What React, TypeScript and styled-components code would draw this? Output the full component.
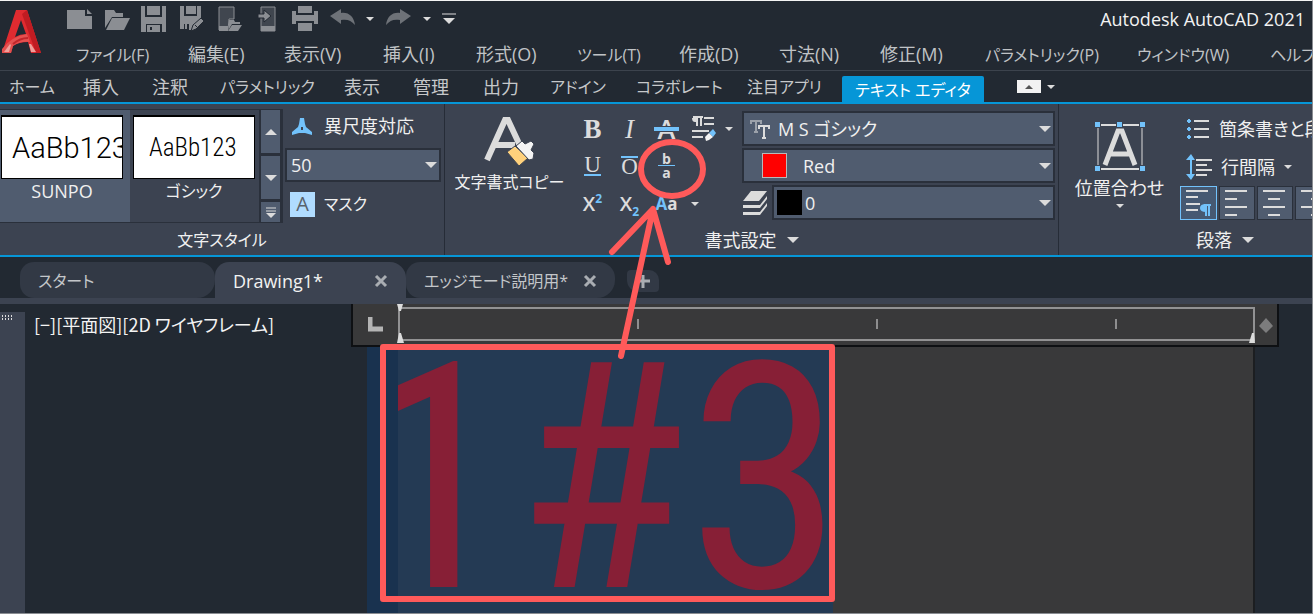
import React from "react";
import styled, { createGlobalStyle, css } from "styled-components";

const ui = '"Open Sans", "Noto Sans CJK JP", sans-serif';

const c = {
  bg: "#222932",
  panel: "#3c4351",
  field: "#505c6f",
  edge: "#2a303b",
  blue: "#0696d7",
  sky: "#72c2fb",
  ink: "#dcdcdc",
  mark: "#ff5a5a",
  grey: "#8b8e93",
};

const Global = createGlobalStyle`
  * { box-sizing: border-box; }
  body { margin: 0; background: ${c.bg}; overflow: hidden; }
  button, select { font: inherit; color: inherit; background: none; border: 0; margin: 0; padding: 0; font-feature-settings: inherit; }
  button { cursor: pointer; }
  svg { display: block; flex: none; }
`;

const Page = styled.div`
  position: relative;
  display: flex;
  flex-direction: column;
  min-height: 100vh;
  overflow: hidden;
  background: ${c.bg};
  color: ${c.ink};
  border-top: 1px solid #f4f4f4;
  border-right: 1px solid #8a8d92;
  border-bottom: 1px solid #8a8d92;
  font-family: ${ui};
  font-size: 18px;
  line-height: 24px;
  font-feature-settings: "palt";
  white-space: nowrap;
`;

/* ---------- title bar and menus ---------- */

const Header = styled.header`
  display: flex;
  height: 69px;
`;

const AppButton = styled.button`
  width: 61px;
  padding: 8px 0 0 1px;
  display: flex;
  align-items: flex-start;
  flex: none;
`;

const HeaderRows = styled.div`
  flex: 1;
  min-width: 0;
`;

const TitleBar = styled.div`
  display: flex;
  align-items: center;
  height: 36px;
  padding: 0 7px 0 5px;
`;

const ToolGroup = styled.div<{ $w: number }>`
  display: flex;
  align-items: center;
  justify-content: space-between;
  width: ${(p) => p.$w}px;
  margin-right: 10px;
`;

const Tool = styled.button`
  display: grid;
  place-items: center;
`;

const AppTitle = styled.h1`
  margin: 0 0 0 auto;
  font-size: 18px;
  line-height: 24px;
  font-weight: 400;
  color: #f2f2f2;
`;

const Menus = styled.nav`
  display: grid;
  grid-template-columns: 112px 96px 99px 93px 101px 102px 100px 101px 105px 152px 133px 80px;
  padding-left: 15px;
  height: 34px;
  align-items: center;
  color: #c0c3c6;
`;

const Label = styled.span<{ $kana?: boolean }>`
  font-size: ${(p) => (p.$kana ? 16 : 18)}px;
`;

const MenuButton = styled.button`
  text-align: left;
`;

const Tabs = styled.nav`
  display: flex;
  height: 34px;
  border-top: 1px solid #3c434d;
  border-bottom: 2px solid ${c.blue};
  color: #c6c8ca;
`;

const TabGrid = styled.div`
  display: grid;
  grid-template-columns: 74px 69px 68px 124px 69px 70px 67px 86px 111px 95px;
  padding-left: 9px;
  align-items: center;
`;

const ActiveTab = styled.button`
  width: 142px;
  margin-top: 5px;
  background: ${c.blue};
  color: #fff;
  border-radius: 2px 2px 0 0;
`;

const TabExtras = styled.div`
  display: flex;
  align-items: center;
  gap: 6px;
  margin-left: 33px;
`;

const Minimise = styled.button`
  display: grid;
  place-items: center;
  width: 24px;
  height: 13px;
  background: #f2f2f2;
`;

/* ---------- ribbon ---------- */

const Ribbon = styled.section`
  display: flex;
  height: 153px;
  background: ${c.panel};
  border-bottom: 2px solid ${c.blue};
  color: #f0f0f0;
  overflow: hidden;
`;

const Panel = styled.section<{ $w: number }>`
  display: flex;
  flex-direction: column;
  flex: none;
  width: ${(p) => p.$w}px;
  border-right: 1px solid #262c37;
`;

const PanelBody = styled.div`
  display: flex;
  flex: 1;
  min-height: 0;
`;

const PanelTitle = styled.h2`
  display: flex;
  align-items: center;
  justify-content: center;
  gap: 10px;
  height: 30px;
  margin: 0;
  font-size: 18px;
  font-weight: 400;
`;

const Gallery = styled.div`
  display: flex;
  flex: none;
  width: 283px;
  margin: 5px 0 2px;
  border: solid ${c.edge};
  border-width: 1px 3px 1px 0;
`;

const StyleTile = styled.button<{ $on?: boolean }>`
  display: flex;
  flex-direction: column;
  align-items: center;
  width: ${(p) => (p.$on ? 130 : 129)}px;
  padding-top: 5px;
  background: ${(p) => (p.$on ? c.field : c.panel)};
  padding-right: ${(p) => (p.$on ? 6 : 1)}px;
  flex: none;
`;

const Preview = styled.span<{ $wide?: boolean }>`
  display: flex;
  align-items: center;
  width: 122px;
  height: 64px;
  padding-left: ${(p) => (p.$wide ? 10 : 15)}px;
  overflow: hidden;
  background: #fff;
  color: #000;
  border: 1px solid #000;
  border-top-width: 2px;
  font-family: ${(p) => (p.$wide ? "Roboto" : '"Roboto Condensed", "Noto Sans Mono CJK JP"')}, sans-serif;
  font-weight: 300;
  font-size: ${(p) => (p.$wide ? 29 : 25)}px;
`;

const GalleryScroll = styled.div`
  display: grid;
  grid-template-rows: 43px 43px 1fr;
  gap: 3px;
  flex: 1;
  padding-left: 2px;
  background: ${c.edge};
`;

const ScrollButton = styled.button`
  display: grid;
  place-items: center;
  background: ${c.field};
`;

const TextOptions = styled.div`
  display: flex;
  flex-direction: column;
  padding: 6px 3px 0 2px;
  gap: 6px;
  flex: 1;
`;

const OptionRow = styled.button`
  display: flex;
  align-items: center;
  gap: 9px;
  height: 32px;
  padding-left: 5px;
`;

const MaskBadge = styled.span`
  display: grid;
  place-items: center;
  width: 25px;
  height: 25px;
  background: #b0dcff;
  color: #59626c;
  font-size: 20px;
`;

const Field = styled.label<{ $h?: number }>`
  position: relative;
  display: flex;
  align-items: center;
  flex: ${(p) => (p.$h ? "none" : "1")};
  height: ${(p) => p.$h ?? 35}px;
  background: ${c.field};
  border: 2px solid ${c.edge};
`;

const Picker = styled.select<{ $pad: number }>`
  appearance: none;
  width: 100%;
  height: 100%;
  padding-left: ${(p) => p.$pad}px;
  outline: 0;
`;

const FieldIcon = styled.span<{ $x: number }>`
  position: absolute;
  left: ${(p) => p.$x}px;
  pointer-events: none;
`;

const FieldArrow = styled.span`
  position: absolute;
  right: 2px;
  pointer-events: none;
`;

const Swatch = styled.span<{ $fill: string; $edge: string }>`
  display: block;
  width: 25px;
  height: 25px;
  background: ${(p) => p.$fill};
  border: 1px solid ${(p) => p.$edge};
`;

const BigButton = styled.button<{ $w: number; $top: number }>`
  display: flex;
  flex-direction: column;
  align-items: center;
  align-self: flex-start;
  flex: none;
  width: ${(p) => p.$w}px;
  padding-top: ${(p) => p.$top}px;
  gap: 4px;
`;

const FormatGrid = styled.div`
  display: grid;
  grid-template-columns: 37px 37px 37px 37px 14px;
  grid-template-rows: 37px 37px 40px;
  padding-top: 6px;
  flex: none;
`;

const FormatButton = styled.button`
  display: grid;
  place-items: center;
`;

const CaseMenu = styled.button`
  padding-left: 6px;
`;

const letter = css`
  font-family: "Liberation Serif", serif;
  line-height: 24px;
  color: ${c.ink};
`;

const Bold = styled.b`
  ${letter}
  font-size: 27px;
`;

const Italic = styled.i`
  ${letter}
  font-size: 27px;
`;

const Lined = styled.span<{ $over?: boolean }>`
  ${letter}
  font-size: 23px;
  line-height: 18px;
  border: 0 solid ${c.sky};
  border-width: ${(p) => (p.$over ? "2px 0 0" : "0 0 2px")};
`;

const Strike = styled.span`
  position: relative;
  font-size: 27px;
  font-weight: 600;
  line-height: 24px;
  color: ${c.ink};
  &::after {
    content: "";
    position: absolute;
    left: -4px;
    right: -4px;
    top: 9px;
    height: 4px;
    background: ${c.sky};
    border: solid ${c.panel};
    border-width: 1px 0;
  }
`;

const Script = styled.span`
  font-size: 20px;
  line-height: 24px;
  font-weight: 600;
  color: ${c.ink};
  sup, sub {
    color: ${c.sky};
    font-size: 12px;
    line-height: 1px;
    font-weight: 700;
  }
`;

const Stack = styled.span`
  display: grid;
  width: 17px;
  justify-items: center;
  font-size: 14px;
  line-height: 13px;
  font-weight: 700;
  color: ${c.ink};
  span + span {
    width: 17px;
    border-top: 1px solid ${c.sky};
  }
`;

const CaseIcon = styled.span`
  font-weight: 700;
  font-size: 17px;
  color: ${c.ink};
  em {
    font-style: normal;
    color: ${c.sky};
  }
`;

const Fields = styled.div`
  display: flex;
  flex-direction: column;
  flex: 1;
  gap: 2px;
  padding: 7px 3px 0 6px;
`;

const LayerRow = styled.div`
  display: flex;
  align-items: center;
  gap: 4px;
`;

const Paragraph = styled.div`
  display: flex;
  flex-direction: column;
  padding: 6px 0 0;
`;

const ParaRow = styled.button`
  display: flex;
  align-items: center;
  gap: 9px;
  height: 38px;
  padding-left: 6px;
`;

const AlignRow = styled.div`
  display: flex;
  gap: 2px;
`;

const AlignButton = styled.button<{ $on?: boolean }>`
  display: grid;
  place-items: center;
  width: ${(p) => (p.$on ? 37 : 36)}px;
  height: 34px;
  background: ${(p) => (p.$on ? "#465972" : c.field)};
  border: 1px solid ${(p) => (p.$on ? c.sky : c.edge)};
`;

/* ---------- drawing tabs ---------- */

const FileTabs = styled.nav`
  display: flex;
  height: 47px;
  padding: 5px 0 0 20px;
  border-bottom: 6px solid ${c.panel};
  color: #c3c6c9;
`;

const FileTab = styled.div<{ $w: number; $on?: boolean }>`
  display: flex;
  align-items: center;
  justify-content: space-between;
  width: ${(p) => p.$w}px;
  padding: 2px 18px 0;
  background: ${(p) => (p.$on ? c.panel : "#323945")};
  color: ${(p) => (p.$on ? "#f2f2f2" : "inherit")};
  border-radius: ${(p) => (p.$on ? "14px 16px 0 0" : "14px 16px 18px 14px")};
`;

const NewTab = styled.button`
  display: grid;
  place-items: center;
  width: 32px;
  height: 22px;
  margin: 8px 0 0 12px;
  background: #323945;
  border-radius: 4px 10px 4px 12px;
`;

/* ---------- drawing area ---------- */

const Workspace = styled.main`
  display: flex;
  flex: 1;
  min-height: 0;
`;

const Dock = styled.aside`
  width: 25px;
  margin-top: 8px;
  padding: 3px 0 0 2px;
  background: ${c.panel};
  flex: none;
`;

const ViewLabel = styled.div`
  width: 326px;
  padding: 8px 0 0 9px;
  flex: none;
  color: #f4f4f4;
  font-family: "Noto Sans CJK JP", sans-serif;
`;

const Editor = styled.section`
  display: flex;
  flex-direction: column;
  flex: 1;
  min-width: 0;
  margin-right: 33px;
`;

const Ruler = styled.div`
  display: flex;
  height: 43px;
  flex: none;
  padding-top: 3px;
  background: #39393a;
  border: solid #0e1013;
  border-width: 0 2px 2px;
`;

const TabStop = styled.button`
  display: grid;
  place-items: center;
  width: 45px;
  height: 35px;
`;

const Scale = styled.div`
  position: relative;
  display: flex;
  flex: 1;
  min-width: 0;
  height: 34px;
  align-items: center;
  border: 2px solid #929293;
  overflow: hidden;
`;

const Segment = styled.span`
  flex: none;
  width: 239px;
  height: 10px;
  border-right: 2px solid #8e8e8f;
`;

const RulerEnd = styled.div`
  display: grid;
  place-items: center;
  width: 22px;
`;

const TextBody = styled.div`
  display: flex;
  flex: 1;
  min-height: 0;
  margin: 0 24px 0 16px;
  background: #39393a;
  border-right: 2px solid #1c1e21;
`;

const Gutter = styled.div`
  width: 31px;
  flex: none;
  background: #19324f;
`;

const Selection = styled.div`
  width: 435px;
  height: 266px;
  overflow: hidden;
  flex: none;
  background: #243a54;
  color: #871f36;
  font-family: "Roboto Condensed", "Noto Sans Mono CJK JP", "Noto Sans CJK JP", sans-serif;
  font-feature-settings: normal;
  font-size: 316px;
  line-height: 264px;
  text-indent: -40px;
`;

const Markup = styled.svg`
  position: absolute;
  left: 0;
  top: -1px;
  pointer-events: none;
`;

/* ---------- drawings ---------- */

const Caret = ({ w = 12, up = false, fill = c.ink }: { w?: number; up?: boolean; fill?: string }) => (
  <svg width={w} height={Math.ceil(w / 2)} viewBox="0 0 12 6">
    <path d={up ? "M0 6 6 0l6 6z" : "M0 0h12L6 6z"} fill={fill} />
  </svg>
);

const Art = ({ w = 26, h = 26, children }: { w?: number; h?: number; children: React.ReactNode }) => (
  <svg width={w} height={h} viewBox={`0 0 ${w} ${h}`} fill="none">
    {children}
  </svg>
);

const Logo = () => (
  <Art w={41} h={46}>
    <path d="M15 1h11l14 43H30l-3-11q-9 0-15 4l-2 7H1z" fill="#e02b30" />
    <path d="M26 1l14 43h-5L21 5z" fill="#c01c22" />
    <path d="M20 11l5 14q-6 0-11 3z" fill={c.bg} />
    <path d="M1 40q10-13 25-15l3 8q-10-1-17 4l-2 7H1z" fill="#e4504f" />
    <path d="M3 43l6-8 1 1-2 7zM30 35l5 8h-5l-2-8z" fill="#efa09b" />
    <path d="M12 35q7-6 15-6" stroke="#c2262b" strokeWidth="2" />
  </Art>
);

const IconNew = () => (
  <Art><path d="M1 4h18v6h7v13H1z" fill={c.grey} /><path d="M21 3l5 5h-5z" fill={c.grey} /></Art>
);
const IconOpen = () => (
  <Art><path d="M1 4h9l2 3h7v4H8L1 22z" fill={c.grey} /><path d="M8 12h18l-6 12H2z" fill={c.grey} /></Art>
);
const IconSave = () => (
  <Art>
    <path d="M0 0h4v11h17V0h4v26h-4v-8H5v8H0z" fill={c.grey} />
    <path d="M6 0h13v9H6z" fill={c.grey} /><path d="M6 19h13v7H6z" fill={c.grey} /><path d="M9 21h2v3H9z" fill={c.bg} />
  </Art>
);
const IconSaveAs = () => (
  <Art>
    <path d="M1 0h4v10h13V0h4v12L12 24H10v-6H5v5H1z" fill={c.grey} /><path d="M7 0h10v8H7z" fill={c.grey} />
    <path d="M6 18h2v5H6z" fill={c.grey} />
    <path d="M12 25l2-6 8-7 3 3-8 8z" fill={c.grey} stroke={c.bg} /><path d="M16 19l3 3" stroke={c.bg} />
  </Art>
);
const IconOpenMobile = () => (
  <Art>
    <path d="M2 1h15v12h-5l-1 11H2z" fill="#40464f" stroke={c.grey} /><path d="M2 20h9v5H2z" fill={c.grey} />
    <path d="M12 14h5l1 2h5v2h-8l-3 5z" fill={c.grey} /><path d="M15 19h10l-4 6H11z" fill={c.grey} />
  </Art>
);
const IconSaveMobile = () => (
  <Art>
    <path d="M6 1h14v24H6z" fill="#40464f" stroke={c.grey} /><path d="M6 20h14v5H6z" fill={c.grey} />
    <path d="M3 8h6V4l7 6-7 6v-4H3z" fill={c.grey} stroke={c.bg} />
  </Art>
);
const IconPrint = () => (
  <Art>
    <path d="M6 0h14v7H6zM0 9h26v9h-4v-3H4v3H0z" fill={c.grey} /><path d="M6 17h14v8H6z" fill={c.grey} />
    <path d="M0 5h4v4H0zM22 5h4v4h-4z" fill={c.grey} />
  </Art>
);
const IconUndo = ({ flip = false }: { flip?: boolean }) => (
  <Art><path transform={flip ? "translate(26 0) scale(-1 1)" : undefined} d="M0 10l11-7v4c8-1 13 4 14 12-4-5-8-6-14-5v4z" fill="#6e7278" /></Art>
);

const IconAnno = () => (
  <Art w={25} h={19}><path d="M10 1h4l1 6 1 3 6 5v3l-7-2h-6l-7 2v-3l6-5 1-3z" fill={c.sky} /><path d="M11 10h2v3h-2z" fill={c.panel} /></Art>
);

const IconCopyFormat = () => (
  <Art w={52} h={50}>
    <path d="M3 44 21 4h3l14 30M11 29h20" stroke={c.ink} strokeWidth="6" />
    <path d="M23 36l8-6 13 12-9 8z" fill="#ffd17c" stroke={c.panel} />
    <path d="M32 30l6-5 3 3 6-3 3 3-3 6 3 3-1 6-4 1z" fill="#f4f4f4" stroke={c.panel} />
  </Art>
);

const IconClear = () => (
  <Art w={25} h={25}>
    <path d="M2 1h10M6 1v9M10 1v9" stroke={c.ink} strokeWidth="2" />
    <path d="M1 2h5v4H4Q1 6 1 2z" fill={c.ink} />
    <path d="M13 2h10M13 8h10M1 15h17M1 21h11" stroke={c.ink} strokeWidth="2" />
    <path d="M18 17l4-4 3 4-3 4z" fill={c.sky} /><path d="M14 21l4-4 4 4-4 3-3 1z" fill="#f4f4f4" />
  </Art>
);

const IconFont = () => (
  <Art w={20} h={20}>
    <path d="M1 5V2h10v3M6 2v11M4 13h4" stroke="#9ba1aa" strokeWidth="2" />
    <path d="M9 10V7h10v3M14 7v12M12 19h4" stroke={c.ink} strokeWidth="2" />
  </Art>
);

const IconLayers = () => (
  <Art w={26} h={26}>
    <path d="M9 1h16l-8 10H1z" fill={c.ink} />
    <path d="M1 15h17l7-9v3l-7 9H1zM1 22h17l7-9v3l-7 9H1z" fill={c.ink} />
  </Art>
);

const IconJustify = () => (
  <Art w={50} h={50}>
    <path d="M3 3h44M3 47h44" stroke={c.ink} strokeWidth="2" /><path d="M3 3v44M47 3v44" stroke={c.ink} />
    <path d="M10 43 23 9h4l13 34M15 32h20" stroke={c.ink} strokeWidth="5" />
    {[[0, 0], [22, 0], [45, 0], [0, 44], [45, 44]].map(([x, y]) => (
      <rect key={`${x}-${y}`} x={x} y={y} width="5" height="5" fill={c.sky} stroke={c.panel} strokeWidth="2" paintOrder="stroke" />
    ))}
  </Art>
);

const IconBullets = () => (
  <Art w={24} h={22}>
    {[3, 11, 19].map((y) => (
      <g key={y}><path d={`M3 ${y - 2}l2 2-2 2-2-2z`} fill={c.sky} stroke={c.sky} /><path d={`M8 ${y}h15`} stroke={c.ink} strokeWidth="2" /></g>
    ))}
  </Art>
);

const IconSpacing = () => (
  <Art w={26} h={26}>
    <path d="M5 4v18" stroke={c.sky} strokeWidth="2" /><path d="M0 6l5-6 4 6zM0 20l5 6 4-6z" fill={c.sky} />
    <path d="M10 6h16M10 11h11M10 16h16M10 21h11" stroke={c.ink} strokeWidth="2" />
  </Art>
);

const IconLines = ({ kind }: { kind: "default" | "left" | "center" | "right" }) => {
  const x = kind === "center" ? 5 : kind === "right" ? 10 : 0;
  return (
    <Art w={26} h={28}>
      {kind === "default" ? (
        <>
          <path d="M0 2h22M0 8h12M0 15h14M0 21h12" stroke={c.ink} strokeWidth="2" />
          <path d="M25 16h-7M20 16v11M23 16v11" stroke={c.sky} strokeWidth="2" /><path d="M20 15v8q-6 0-6-4t6-4z" fill={c.sky} />
        </>
      ) : (
        <path d={`M1 2h22M${x + 1} 10h12M1 18h22M${x + 1} 26h12`} stroke={c.ink} strokeWidth="2" />
      )}
    </Art>
  );
};

const Cross = () => (
  <Art w={14} h={14}><path d="M2 2l10 10M12 2 2 12" stroke="#a9adb2" strokeWidth="3" /></Art>
);

/* ---------- data ---------- */

const menus: [string, boolean?][] = [
  ["ファイル(F)", true], ["編集(E)"], ["表示(V)"], ["挿入(I)"], ["形式(O)"], ["ツール(T)", true], ["作成(D)"],
  ["寸法(N)"], ["修正(M)"], ["パラメトリック(P)", true], ["ウィンドウ(W)", true], ["ヘルプ(H)", true],
];

const tabs: [string, boolean?][] = [
  ["ホーム", true], ["挿入"], ["注釈"], ["パラメトリック", true], ["表示"], ["管理"], ["出力"],
  ["アドイン", true], ["コラボレート", true], ["注目アプリ", true],
];

const quick: [string, React.ReactNode][] = [
  ["新規作成", <IconNew />], ["開く", <IconOpen />], ["保存", <IconSave />], ["名前を付けて保存", <IconSaveAs />],
  ["モバイルから開く", <IconOpenMobile />], ["モバイルに保存", <IconSaveMobile />], ["印刷", <IconPrint />], ["元に戻す", <IconUndo />],
];

export default function App() {
  return (
    <Page>
      <Global />
      <Header>
        <AppButton aria-label="アプリケーション"><Logo /></AppButton>
        <HeaderRows>
          <TitleBar>
            <ToolGroup $w={290}>
              {quick.map(([name, icon]) => <Tool key={name} aria-label={name}>{icon}</Tool>)}
            </ToolGroup>
            <ToolGroup $w={90}>
              <Tool aria-label="元に戻す履歴"><Caret w={8} /></Tool>
              <Tool aria-label="やり直し"><IconUndo flip /></Tool>
              <Tool aria-label="やり直し履歴"><Caret w={8} /></Tool>
              <Tool aria-label="カスタマイズ">
                <Art w={14} h={12}><path d="M0 1h14" stroke={c.ink} strokeWidth="1" /><path d="M1 5h12l-6 6z" fill={c.ink} /></Art>
              </Tool>
            </ToolGroup>
            <AppTitle>Autodesk AutoCAD 2021</AppTitle>
          </TitleBar>
          <Menus>
            {menus.map(([t, kana]) => <MenuButton key={t}><Label $kana={kana}>{t}</Label></MenuButton>)}
          </Menus>
        </HeaderRows>
      </Header>

      <Tabs>
        <TabGrid>
          {tabs.map(([t, kana]) => <MenuButton key={t}><Label $kana={kana}>{t}</Label></MenuButton>)}
        </TabGrid>
        <ActiveTab><Label $kana>テキスト エディタ</Label></ActiveTab>
        <TabExtras>
          <Minimise aria-label="最小化"><Caret w={8} up fill="#555" /></Minimise>
          <Tool aria-label="リボン表示"><Caret w={8} /></Tool>
        </TabExtras>
      </Tabs>

      <Ribbon>
        <Panel $w={445}>
          <PanelBody>
            <Gallery>
              <StyleTile $on><Preview $wide>AaBb123</Preview><Label>SUNPO</Label></StyleTile>
              <StyleTile><Preview>AaBb123</Preview><Label $kana>ゴシック</Label></StyleTile>
              <GalleryScroll>
                <ScrollButton aria-label="上へ"><Caret up /></ScrollButton>
                <ScrollButton aria-label="下へ"><Caret /></ScrollButton>
                <ScrollButton aria-label="一覧">
                  <Art w={12} h={11}><path d="M1 1h10M1 4h10" stroke={c.ink} /><path d="M1 6h10l-5 5z" fill={c.ink} /></Art>
                </ScrollButton>
              </GalleryScroll>
            </Gallery>
            <TextOptions>
              <OptionRow><IconAnno /><Label>異尺度対応</Label></OptionRow>
              <Field $h={34}>
                <Picker $pad={4} aria-label="文字の高さ"><option>50</option></Picker>
                <FieldArrow><Caret /></FieldArrow>
              </Field>
              <OptionRow><MaskBadge>A</MaskBadge><Label $kana>マスク</Label></OptionRow>
            </TextOptions>
          </PanelBody>
          <PanelTitle><Label $kana>文字スタイル</Label></PanelTitle>
        </Panel>

        <Panel $w={614}>
          <PanelBody>
            <BigButton $w={129} $top={12}><IconCopyFormat /><Label $kana>文字書式コピー</Label></BigButton>
            <FormatGrid>
              <FormatButton><Bold>B</Bold></FormatButton>
              <FormatButton><Italic>I</Italic></FormatButton>
              <FormatButton><Strike>A</Strike></FormatButton>
              <FormatButton aria-label="書式をクリア"><IconClear /></FormatButton>
              <FormatButton aria-label="書式をクリアのメニュー"><Caret w={8} /></FormatButton>
              <FormatButton><Lined>U</Lined></FormatButton>
              <FormatButton><Lined $over>O</Lined></FormatButton>
              <FormatButton><Stack><span>b</span><span>a</span></Stack></FormatButton>
              <span /><span />
              <FormatButton><Script>X<sup>2</sup></Script></FormatButton>
              <FormatButton><Script>X<sub>2</sub></Script></FormatButton>
              <FormatButton><CaseIcon><em>A</em>a</CaseIcon></FormatButton>
              <CaseMenu aria-label="大文字と小文字のメニュー"><Caret w={8} /></CaseMenu>
            </FormatGrid>
            <Fields>
              <Field $h={35}>
                <FieldIcon $x={6}><IconFont /></FieldIcon>
                <Picker $pad={34} aria-label="フォント"><option>M S ゴシック</option></Picker>
                <FieldArrow><Caret /></FieldArrow>
              </Field>
              <Field $h={35}>
                <FieldIcon $x={18}><Swatch $fill="#ff0000" $edge="#b9b9b9" /></FieldIcon>
                <Picker $pad={59} aria-label="色"><option>Red</option></Picker>
                <FieldArrow><Caret /></FieldArrow>
              </Field>
              <LayerRow>
                <IconLayers />
                <Field>
                  <FieldIcon $x={3}><Swatch $fill="#000" $edge="#000" /></FieldIcon>
                  <Picker $pad={31} aria-label="画層"><option>0</option></Picker>
                  <FieldArrow><Caret /></FieldArrow>
                </Field>
              </LayerRow>
            </Fields>
          </PanelBody>
          <PanelTitle>書式設定<Caret /></PanelTitle>
        </Panel>

        <Panel $w={333}>
          <PanelBody>
            <BigButton $w={121} $top={18}>
              <IconJustify />
              <Label>位置合わせ</Label>
              <Caret w={8} />
            </BigButton>
            <Paragraph>
              <ParaRow><IconBullets /><Label>箇条書きと段落</Label></ParaRow>
              <ParaRow><IconSpacing /><Label>行間隔</Label><Caret w={8} /></ParaRow>
              <AlignRow>
                <AlignButton $on aria-label="既定"><IconLines kind="default" /></AlignButton>
                <AlignButton aria-label="左寄せ"><IconLines kind="left" /></AlignButton>
                <AlignButton aria-label="中央"><IconLines kind="center" /></AlignButton>
                <AlignButton aria-label="右寄せ"><IconLines kind="right" /></AlignButton>
              </AlignRow>
            </Paragraph>
          </PanelBody>
          <PanelTitle>段落<Caret /></PanelTitle>
        </Panel>
      </Ribbon>

      <FileTabs>
        <FileTab $w={195}><Label $kana>スタート</Label></FileTab>
        <FileTab $w={191} $on><Label>Drawing1*</Label><Tool aria-label="Drawing1 を閉じる"><Cross /></Tool></FileTab>
        <FileTab $w={209}><Label $kana>エッジモード説明用*</Label><Tool aria-label="図面を閉じる"><Cross /></Tool></FileTab>
        <NewTab aria-label="新しい図面"><Art w={13} h={13}><path d="M6 0v13M0 6h13" stroke="#a9adb2" strokeWidth="3" /></Art></NewTab>
      </FileTabs>

      <Workspace>
        <Dock>
          <Art w={12} h={6}><path d="M0 1h12M0 4h12" stroke={c.ink} strokeWidth="2" strokeDasharray="1 2" /></Art>
        </Dock>
        <ViewLabel>[−][平面図][2D ワイヤフレーム]</ViewLabel>
        <Editor>
          <Ruler>
            <TabStop aria-label="タブ"><Art w={15} h={15}><path d="M2 0v12h13" stroke="#b4b4b4" strokeWidth="5" /></Art></TabStop>
            <Scale><Segment /><Segment /><Segment /></Scale>
            <RulerEnd><Art w={16} h={16}><path d="M8 0l7 8-7 7-7-7z" fill="#7c7c7d" /></Art></RulerEnd>
          </Ruler>
          <TextBody>
            <Gutter />
            <Selection>1#3</Selection>
          </TextBody>
        </Editor>
      </Workspace>

      <Markup width="1313" height="614" viewBox="0 0 1313 614" fill="none" aria-hidden="true">
        <path d="M397 304h6l-2 7h-2zM397 343l2-10h2l3 10zM1249 343l3-10h2l1 10z" fill="#dcdcdc" />
        <g stroke={c.mark} strokeWidth="6" strokeLinecap="round" strokeLinejoin="round">
          <rect x="383" y="347" width="449" height="252" />
          <ellipse cx="672" cy="169" rx="31" ry="27" />
          <path d="M621 356 653 209M612 252l41-43 15 53" />
        </g>
      </Markup>
    </Page>
  );
}
